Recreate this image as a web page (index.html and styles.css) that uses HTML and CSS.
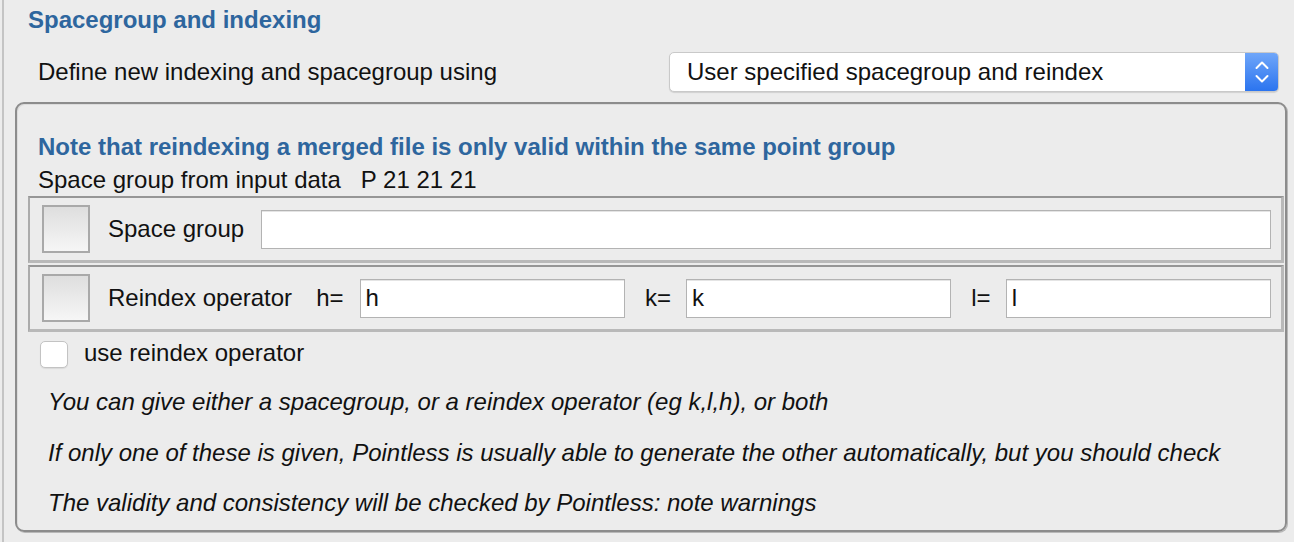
FILE: index.html
```html
<!DOCTYPE html>
<html>
<head>
<meta charset="utf-8">
<link rel="stylesheet" href="styles.css">
</head>
<body>
<div class="app">
  <div class="title">Spacegroup and indexing</div>
  <div class="define-row">
    <span class="define-label">Define new indexing and spacegroup using</span>
    <div class="select">
      <span class="select-text">User specified spacegroup and reindex</span>
      <span class="select-btn">
        <svg width="16" height="26" viewBox="0 0 16 26"><path d="M2.5 9 L8 3.5 L13.5 9 M2.5 17 L8 22.5 L13.5 17" fill="none" stroke="#fff" stroke-width="2" stroke-linecap="round" stroke-linejoin="round"/></svg>
      </span>
    </div>
  </div>
  <div class="panel">
    <div class="note">Note that reindexing a merged file is only valid within the same point group</div>
    <div class="from">Space group from input data&nbsp;&nbsp;&nbsp;P 21 21 21</div>
    <div class="frame frame-first">
      <span class="toggle"></span>
      <span class="lbl">Space group</span>
      <input class="field field-sg" type="text" value="">
    </div>
    <div class="frame frame-second">
      <span class="toggle"></span>
      <span class="lbl">Reindex operator</span>
      <span class="eq eq-h">h=</span>
      <input class="field field-op field-h" type="text" value="h">
      <span class="eq eq-k">k=</span>
      <input class="field field-op" type="text" value="k">
      <span class="eq eq-l">l=</span>
      <input class="field field-op" type="text" value="l">
    </div>
    <div class="use-row">
      <span class="check"></span>
      <span class="use-label">use reindex operator</span>
    </div>
    <div class="hint hint-first">You can give either a spacegroup, or a reindex operator (eg k,l,h), or both</div>
    <div class="hint hint-second">If only one of these is given, Pointless is usually able to generate the other automatically, but you should check</div>
    <div class="hint">The validity and consistency will be checked by Pointless: note warnings</div>
  </div>
</div>
</body>
</html>
```

FILE: styles.css
```css
html, body {
  margin: 0;
  padding: 0;
  background: #ececec;
}
body {
  font-family: "Liberation Sans", Arial, sans-serif;
  font-size: 24px;
  color: #111;
  width: 1294px;
  height: 542px;
  overflow: hidden;
}
.app {
  margin-left: 2px;
  border-left: 2px solid #c4c4c4;
  height: 542px;
  box-sizing: border-box;
  padding-top: 6px;
}
.title {
  padding-left: 24px;
  font-weight: bold;
  color: #2e669e;
  line-height: 28px;
  height: 28px;
}
.define-row {
  margin-top: 18px;
  height: 40px;
  display: flex;
  align-items: center;
  justify-content: space-between;
  padding-left: 34px;
  padding-right: 15px;
}
.define-label {
  line-height: 28px;
}
.select {
  width: 610px;
  height: 40px;
  box-sizing: border-box;
  background: #fff;
  border: 1px solid #c9c9c9;
  border-radius: 5px;
  box-shadow: 0 1px 1px rgba(0,0,0,0.12);
  display: flex;
  align-items: center;
  justify-content: space-between;
  overflow: hidden;
}
.select-text {
  padding-left: 17px;
  line-height: 28px;
}
.select-btn {
  width: 33px;
  height: 100%;
  background: linear-gradient(#6fa6f9, #2b74ef);
  display: flex;
  align-items: center;
  justify-content: center;
}
.panel {
  margin: 10px 7px 0 11px;
  height: 430px;
  box-sizing: border-box;
  border: 2px solid #8c8c8c;
  border-radius: 9px;
  box-shadow: 1px 1px 0 #b8b8b8, inset 1px 1px 0 #dcdcdc;
  padding-left: 11px;
  padding-right: 1px;
}
.note {
  margin-top: 29px;
  padding-left: 10px;
  font-weight: bold;
  color: #2e669e;
  line-height: 28px;
  height: 28px;
}
.from {
  margin-top: 5px;
  padding-left: 10px;
  line-height: 28px;
  height: 28px;
}
.frame {
  height: 67px;
  box-sizing: border-box;
  border-style: solid;
  border-width: 2px 3px 3px 2px;
  border-color: #969696 #b9b9b9 #b9b9b9 #ababab;
  display: flex;
  align-items: center;
  padding-left: 12px;
  padding-right: 10px;
}
.frame-first {
  margin-top: 2px;
}
.frame-second {
  margin-top: 2px;
}
.toggle {
  width: 48px;
  height: 48px;
  box-sizing: border-box;
  border: 2px solid #a9a9a9;
  background: linear-gradient(#dedede, #f6f6f6);
  flex: none;
}
.lbl {
  margin-left: 18px;
  line-height: 28px;
  flex: none;
}
.field {
  height: 39px;
  box-sizing: border-box;
  border: 1px solid #b3b3b3;
  box-shadow: inset 0 1px 0 #e4e4e4;
  background: #fff;
  font: inherit;
  color: #111;
  padding: 0 0 0 5px;
  margin: 0;
  outline: none;
  min-width: 0;
}
.field-sg {
  flex: 1;
  margin-left: 17px;
}
.field-op {
  flex: 1;
  margin-left: 15px;
}
.field-h {
  margin-left: 16px;
}
.eq {
  line-height: 28px;
  flex: none;
  margin-left: 20px;
}
.eq-h {
  margin-left: 24px;
}
.use-row {
  margin-top: 9px;
  height: 27px;
  display: flex;
  align-items: center;
  padding-left: 12px;
}
.check {
  width: 28px;
  height: 27px;
  box-sizing: border-box;
  border: 1px solid #c3c3c3;
  border-radius: 5px;
  background: #fff;
  box-shadow: 0 1px 1px rgba(0,0,0,0.08);
  flex: none;
}
.use-label {
  margin-left: 16px;
  line-height: 28px;
  margin-bottom: 4px;
}
.hint {
  font-style: italic;
  padding-left: 20px;
  line-height: 28px;
  height: 28px;
  margin-top: 22px;
}
.hint-first {
  margin-top: 20px;
}
.hint-second {
  margin-top: 23px;
}
```
